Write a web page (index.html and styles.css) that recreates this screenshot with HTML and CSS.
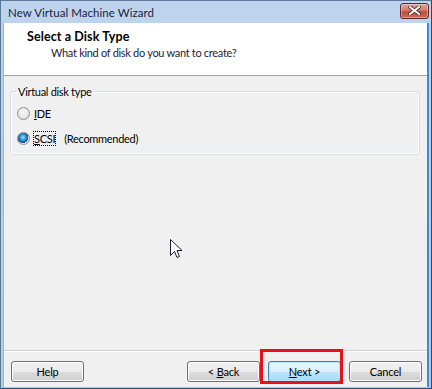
FILE: index.html
```html
<!DOCTYPE html>
<html>
<head>
<meta charset="utf-8">
<link rel="stylesheet" href="styles.css">
</head>
<body>
<div class="window">
  <div class="titlebar">
    <span class="title">New Virtual Machine Wizard</span>
    <div class="close">
      <svg width="13" height="9" viewBox="0 0 13 9">
        <path d="M2 1 L11 8 M11 1 L2 8" stroke="#4a2020" stroke-width="3.6" stroke-linecap="square"/>
        <path d="M2 1 L11 8 M11 1 L2 8" stroke="#ffffff" stroke-width="2" stroke-linecap="square"/>
      </svg>
    </div>
  </div>
  <div class="client">
    <div class="header">
      <div class="h-title">Select a Disk Type</div>
      <div class="h-sub">What kind of disk do you want to create?</div>
    </div>
    <div class="body">
      <fieldset class="group">
        <legend>Virtual disk type</legend>
        <label class="radio-row">
          <span class="radio"></span>
          <span><u>I</u>DE</span>
        </label>
        <label class="radio-row">
          <span class="radio checked"></span>
          <span class="focus"><u>S</u>CSI</span>
          <span class="rec">(Recommended)</span>
        </label>
      </fieldset>
      <svg class="cursor" width="13" height="21" viewBox="0 0 13 21">
        <path d="M0.5 0.5 L0.5 16.5 L4.5 12.5 L7 18.5 L9.5 17.5 L7 11.5 L12 11.5 Z" fill="#ffffff" stroke="#1a1a2a" stroke-width="1"/>
      </svg>
    </div>
    <div class="footer">
      <button class="btn">Help</button>
      <div class="spacer"></div>
      <button class="btn">&lt; <u>B</u>ack</button>
      <div class="next-wrap">
        <button class="btn default"><u>N</u>ext &gt;</button>
        <div class="highlight"></div>
      </div>
      <button class="btn">Cancel</button>
    </div>
  </div>
</div>
</body>
</html>
```
FILE: styles.css
```css
* { box-sizing: border-box; }
html, body { margin: 0; padding: 0; background: #ffffff; }
body { font-family: Lato, "Noto Sans", sans-serif; font-size: 11px; letter-spacing: -0.3px; color: #000; }

.window {
  width: 432px;
  height: 389px;
  background: linear-gradient(#bed3ee, #b4cbe8);
  border: 1px solid #5d7796;
  border-right: 1px solid #25496f;
  border-bottom: 1px solid #25496f;
  display: flex;
  flex-direction: column;
  padding: 0 2px 1px 2px;
}
.titlebar {
  height: 22px;
  display: flex;
  align-items: center;
  justify-content: space-between;
  padding-left: 5px;
  flex: none;
}
.title { font-size: 11.5px; letter-spacing: 0.05px; color: #15253a; }
.close {
  width: 29px;
  height: 16px;
  margin-top: -3px;
  border: 1px solid #5a2a28;
  border-radius: 3px;
  background: linear-gradient(#e3a496 0%, #d27e6e 45%, #c04e3c 55%, #cc6a55 100%);
  display: flex;
  align-items: center;
  justify-content: center;
  box-shadow: inset 0 0 0 1px rgba(255,255,255,0.35);
}
.client {
  flex: 1;
  display: flex;
  flex-direction: column;
  background: #f0f0f0;
  border-left: 1px solid #9db4cf;
  border-right: 2px solid #3f8ad2;
}
.header {
  background: #ffffff;
  height: 53px;
  border-bottom: 1px solid #a0a0a0;
  padding: 6px 0 0 23px;
  flex: none;
}
.h-title { font-weight: bold; font-size: 12.5px; letter-spacing: 0.1px; line-height: 16px; }
.h-sub { line-height: 16px; padding-left: 24px; color: #1b1b40; }
.body {
  flex: 1;
  padding: 8px 7px 0 6px;
  position: relative;
}
.group {
  margin: 0;
  border: 1px solid #d5dfe5;
  border-radius: 3px;
  padding: 2px 6px 0 6px;
  height: 71px;
  box-shadow: inset 0 0 0 1px #ffffff;
}
.group legend { padding: 0 2px; margin-left: -1px; line-height: 15px; }
.radio-row { display: flex; align-items: center; height: 25px; gap: 4px; }
.radio {
  width: 13px; height: 13px; border-radius: 50%;
  border: 1px solid #8f8f8f;
  background: radial-gradient(circle at 50% 40%, #f8f8f8, #d8d8d8);
  display: inline-block; flex: none;
}
.radio.checked {
  background: radial-gradient(circle at 45% 40%, #9fe3ff 0%, #2a8fd4 35%, #0b4f8a 60%, #e4e4e4 62%, #f4f4f4 100%);
}
.focus { outline: 1px dotted #000; outline-offset: 0px; }
.rec { margin-left: 5px; }
.cursor { position: absolute; left: 166px; top: 163px; }
.footer {
  height: 37px;
  border-top: 1px solid #d0d0d0;
  display: flex;
  align-items: flex-start;
  padding: 10px 5px 0 7px;
  flex: none;
  box-shadow: inset 0 1px 0 #ffffff;
}
.spacer { flex: 1; }
.btn {
  width: 73px;
  height: 21px;
  font-family: inherit;
  font-size: 11px;
  letter-spacing: -0.2px;
  color: #000;
  border: 1px solid #707070;
  border-radius: 3px;
  background: linear-gradient(#f2f2f2 0%, #ebebeb 50%, #dddddd 51%, #cfcfcf 100%);
  box-shadow: inset 0 0 0 1px #fcfcfc;
  padding: 0;
  margin-left: 8px;
  flex: none;
}
.btn:first-child { margin-left: 0; }
.next-wrap {
  position: relative;
  margin-left: 8px;
  flex: none;
}
.next-wrap .btn { margin-left: 0; display: block; }
.highlight {
  position: absolute;
  left: -8px;
  top: -12px;
  width: 83px;
  height: 35px;
  border: 3px solid #e8101b;
  pointer-events: none;
}
.btn.default {
  border-color: #3c7fb1;
  background: linear-gradient(#eaf6fd 0%, #d9f0fc 50%, #bee6fd 51%, #a7d9f5 100%);
  box-shadow: inset 0 0 0 1px #b6e3fb;
}
```
